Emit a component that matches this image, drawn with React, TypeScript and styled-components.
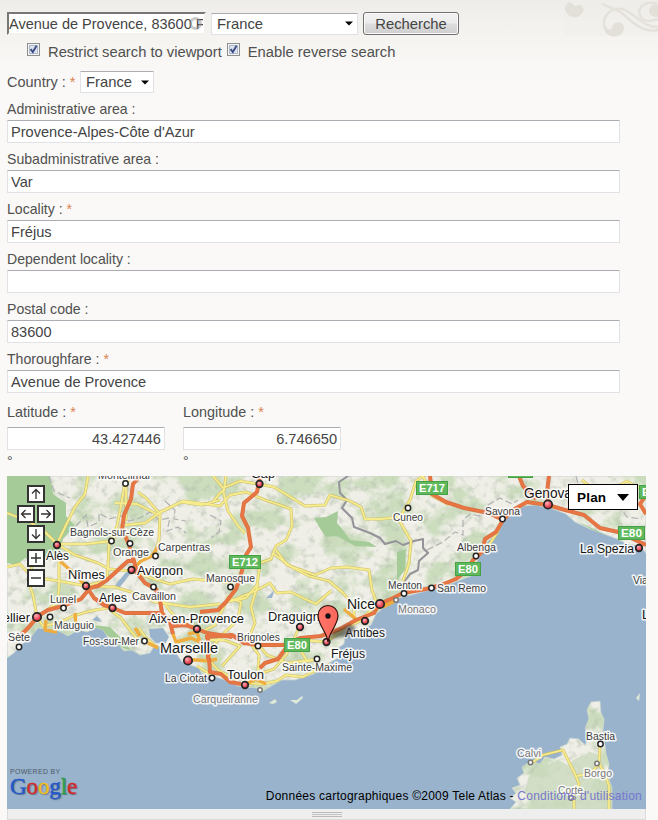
import React from 'react';
import styled, { createGlobalStyle } from 'styled-components';

const GlobalStyle = createGlobalStyle`
  * { box-sizing: border-box; }
  body {
    margin: 0;
    background: #faf9f7;
    color: #505050;
    font-family: "Liberation Sans", Arial, sans-serif;
  }
`;

const Page = styled.main`
  position: relative;
  width: 658px;
  height: 820px;
  overflow: hidden;
  padding: 12px 12px 0 7px;
  background: linear-gradient(#eeede9 0, #f3f2ee 28px, #f9f8f6 66px, #faf9f7 100px);
`;

const Flourish = styled.svg`
  position: absolute;
  top: 0;
  right: 0;
`;

const SearchRow = styled.div`
  display: flex;
  height: 23px;
  align-items: center;
`;

const SearchBox = styled.div`
  position: relative;
  width: 199px;
  height: 23px;
`;

const SearchInput = styled.input`
  width: 199px;
  height: 23px;
  padding: 0 1px 0 0;
  border: 2px solid #f3f2ef;
  border-top-color: #777;
  border-left-color: #777;
  background: #fff;
  color: #444;
  font: 14.5px "Liberation Sans", Arial, sans-serif;
  outline: none;
`;

const Throbber = styled.span`
  position: absolute;
  left: 182px;
  top: 5px;
  width: 13px;
  height: 13px;
  border: 3px solid rgba(150, 150, 150, 0.5);
  border-radius: 50%;
`;

const SelectBox = styled.div<{ $w: number; $h: number; $ml: number }>`
  display: flex;
  align-items: center;
  justify-content: space-between;
  width: ${p => p.$w}px;
  height: ${p => p.$h}px;
  margin-left: ${p => p.$ml}px;
  padding: 0 4px 0 5px;
  border: 1px solid #e0e2e6;
  border-top-color: #abadb3;
  border-radius: 1px;
  background: #fff;
  color: #444;
  font-size: 14.8px;
`;

const Button = styled.button`
  width: 96px;
  height: 23px;
  margin-left: 5px;
  padding: 0;
  border: 1px solid #707070;
  border-radius: 3px;
  background: linear-gradient(#f2f2f2 0, #ebebeb 48%, #dddddd 52%, #cfcfcf 100%);
  box-shadow: inset 0 0 0 1px #fafafa;
  color: #444;
  font: 14.8px/20px "Liberation Sans", Arial, sans-serif;
`;

const CheckRow = styled.div`
  display: flex;
  align-items: center;
  height: 20px;
  margin-top: 7px;
  padding-left: 20px;
  font-size: 14.75px;
`;

const CheckItem = styled.label`
  display: flex;
  align-items: center;
  white-space: nowrap;
  & + & { margin-left: 5px; }
`;

const CheckIcon = styled.svg`
  margin: 0 8px 5px 0;
  flex: none;
`;

const CountryRow = styled.div`
  display: flex;
  align-items: center;
  height: 24px;
  margin-top: 8px;
`;

const Star = styled.span`
  color: #d9824f;
`;

const Field = styled.div`
  height: 50px;
`;

const Label = styled.label`
  display: block;
  height: 21px;
  font-size: 14.1px;
  line-height: 21px;
  white-space: pre;
`;

const CountryLabel = styled(Label)`
  width: 69px;
  font-size: 14.5px;
`;

const Fields = styled.section`
  padding-top: 5px;
`;

const Input = styled.input<{ $right?: boolean }>`
  display: block;
  width: ${p => (p.$right ? '158px' : '613px')};
  height: 23px;
  padding: 1px 3px 0;
  border: 1px solid #e0e2e6;
  border-top-color: #abadb3;
  border-radius: 1px;
  background: #fff;
  color: #444;
  font: 14.6px "Liberation Sans", Arial, sans-serif;
  text-align: ${p => (p.$right ? 'right' : 'left')};
  outline: none;
`;

const Coordinates = styled.section`
  display: flex;
  gap: 18px;
  height: 77px;
  padding-top: 3px;
`;

const Coordinate = styled.div`
  ${Label} { height: 25px; line-height: 21px; font-size: 14.4px; }
`;

const Degree = styled.div`
  font-size: 14px;
  line-height: 20px;
  margin-top: 1px;
`;

const MapFrame = styled.section`
  position: relative;
  width: 639px;
  height: 333px;
  overflow: hidden;
`;

const MapSvg = styled.svg`
  display: block;
`;

const PadGrid = styled.div`
  position: absolute;
  left: 9px;
  top: 9px;
  display: grid;
  grid-template-columns: repeat(4, 10px);
  grid-auto-rows: 20px;
`;

const PadButton = styled.button<{ $col: number; $top?: number }>`
  grid-column: ${p => p.$col} / span 2;
  margin: ${p => p.$top ?? 0}px 0 0 1px;
  width: 18px;
  height: 18px;
  padding: 0;
  border: 2px solid #333;
  background: #fff;
  display: grid;
  place-items: center;
`;

const PlanButton = styled.button`
  position: absolute;
  left: 561px;
  top: 8px;
  width: 70px;
  height: 26px;
  display: flex;
  align-items: center;
  gap: 11px;
  padding: 0 0 0 8px;
  border: 1px solid #000;
  outline: 0;
  background: #fff;
  color: #000;
  font: bold 13.5px "Liberation Sans", Arial, sans-serif;
  letter-spacing: 0.2px;
`;

const Credit = styled.div`
  position: absolute;
  right: 4px;
  bottom: 5px;
  color: #000;
  font-size: 12px;
  line-height: 16px;
  letter-spacing: 0.235px;
  white-space: nowrap;
`;

const Terms = styled.span`
  color: #7777cc;
`;

const Brand = styled.div`
  position: absolute;
  left: 3px;
  top: 291px;
  font-size: 7px;
  line-height: 9px;
  letter-spacing: 0.3px;
  color: #4c5a68;
`;

const Wordmark = styled.div`
  margin-top: -2px;
  font: 23px/26px "Liberation Serif", serif;
  letter-spacing: -0.1px;
  text-shadow: 1px 1px 1px rgba(40, 50, 70, 0.5);
  -webkit-text-stroke: 0.4px;
`;

const Letter = styled.span<{ $c: string }>`
  color: ${p => p.$c};
`;

const Grippie = styled.div`
  display: flex;
  justify-content: center;
  align-items: flex-start;
  width: 639px;
  height: 11px;
  padding-top: 3px;
  border: 1px solid #dcdcdc;
  border-top: 0;
  background: #eee;
`;

const Grip = styled.span`
  width: 30px;
  height: 5px;
  border: 1px solid #bbb;
  border-width: 1px 0;
  background: linear-gradient(#eee 1px, #c4c4c4 1px, #c4c4c4 2px, #eee 2px);
`;

const Caret = () => (
  <svg width="8" height="5" viewBox="0 0 8 5"><path d="M0 0.5H8L4 4.5Z" fill="#000" /></svg>
);

const Check = () => (
  <CheckIcon width="13" height="13" viewBox="0 0 13 13">
    <rect x=".5" y=".5" width="12" height="12" fill="#f4f4f4" stroke="#8e8f8f" />
    <rect x="2.5" y="2.5" width="8" height="8" fill="#dce3ec" stroke="#aeb9c8" />
    <path d="M3.6 6.2L5.8 9L9.5 2.8" fill="none" stroke="#3d4c86" strokeWidth="1.9" />
  </CheckIcon>
);

const Arrow = ({ angle }: { angle: number }) => (
  <svg width="14" height="14" viewBox="0 0 14 14">
    <path d="M7 12V2.5M3 6.5L7 2.5L11 6.5" transform={`rotate(${angle} 7 7)`} fill="none" stroke="#333" strokeWidth="1.3" />
  </svg>
);

const Sign = ({ plus }: { plus?: boolean }) => (
  <svg width="14" height="14" viewBox="0 0 14 14">
    <path d={plus ? 'M2 7H12M7 2V12' : 'M2 7H12'} stroke="#333" strokeWidth="1.5" />
  </svg>
);

const MAINLAND =
  'M7 476H646V553L640 546L627 544L617 539L604 534L590 529L575 522L566 514L550 508L535 505L524 506L512 514L502 521L498 534L488 541L482 553L477 561L476 574L463 579L453 583L441 587L426 591L411 595L398 598L389 600L383 608L376 614L371 625L361 629L352 634L345 636L344 644L338 648L340 657L329 663L322 667L314 674L305 677L295 680L282 680L273 685L263 691L257 688L247 687L237 686L228 681L219 678L210 675L203 676L199 668L190 665L182 662L176 653L164 648L155 645L150 653L140 655L132 650L124 651L117 643L108 638L103 630L94 627L88 632L78 630L68 636L59 631L46 629L38 628L30 638L21 645L14 653L7 658Z';
const CORSICA =
  'M591 702L600 701L601 713L604 719L603 730L605 745L606 754L609 764L608 776L612 788L612 809H510L516 802L510 798L516 793L512 788L520 785L517 778L524 773L522 767L531 761L540 764L545 757L554 759L562 755L560 747L567 744L570 738L579 739L585 745L588 739L585 728L589 719L587 710Z';

const FORESTS = [
  'M7 476H50L53 494L66 503L66 516L75 526L63 539L60 553L42 563L25 558L17 565L7 563Z',
  'M314 518L326 517L338 511L337 523L343 530L350 540L369 542L377 547L355 546L337 536L326 537L321 530Z',
  'M397 552L406 549L405 570L397 580Z',
  'M92 625L110 627L126 643L131 651L116 645L108 636Z',
  'M575 520L596 530L617 540L607 538Z',
];

const BORDERS = [
  'M348 476L339 482L340 493L347 500L342 508L352 518L354 527L370 533L380 538L385 544L396 541L403 545L414 541L423 539L423 548L428 553L419 561L418 570L410 574L404 582L402 594',
];
const FAINT_BORDERS = [
  'M49 476L54 491L70 498', 'M76 526L86 515L88 527L99 522L99 513L109 519L121 516L129 521L140 518L150 512L159 520L170 518L167 531L178 527L186 533',
  'M165 501L175 510L174 519L186 521', 'M210 515L221 521L219 532L211 538', 'M427 550L443 542L455 532L463 535L463 520L470 514L480 516L488 505L500 498L512 504L518 500',
  'M576 476L580 491L594 492L602 507L621 509L627 517L642 519',
];

const MINOR_ROADS = [
  'M7 513L30 522L45 532L57 544L66 525L75 507L85 494L88 476', 'M57 544L85 544L112 541L126 519L126 484L132 476',
  'M57 544L75 555L98 563L109 569L131 571L154 579L170 584L193 579L232 583',
  'M7 567L20 564L32 577L59 581L86 586L115 587L131 592L155 602L190 607L220 604',
  'M125 482L121 506L117 526L109 543L108 567L107 580L86 586', 'M59 561L59 585L58 602L38 617',
  'M115 503L137 504L157 514L181 502L202 505L220 500', 'M154 556L159 540L160 514L146 498L138 492',
  'M125 525L145 523L162 511L183 501L220 506L230 495L246 492L265 500L280 505L291 509L292 526L286 540L276 546L271 559L260 563L257 585L246 598L226 602L215 625L205 630',
  'M213 502L219 494L224 490L226 476M213 476L223 488L240 481L258 484L274 487L284 493L305 506L325 505L330 495L350 501L361 507L365 519L381 519L400 517L410 500L416 481L423 476',
  'M399 520L411 541L409 563L403 581',
  'M223 490L228 511L239 527L245 533', 'M274 554L293 568L309 576L329 581L342 592L354 605L354 617',
  'M276 550L287 565L304 571L315 575L331 568L347 567L369 570L372 590L377 604', 'M233 600L253 592L270 583L277 593L291 592L303 598L316 604L331 591',
  'M258 584L251 607L255 623L248 640L259 655L258 671', 'M299 627L293 642L286 655L274 669L259 674',
  'M226 597L241 602L238 620L225 632L211 648', 'M139 641L130 630L121 618L110 610M139 628L146 638L158 648',
  'M33 563L28 580L33 595L37 617L43 626L58 623L73 616L90 611L113 607', 'M153 587L163 601L171 612L180 621L197 629',
  'M423 476L432 496L440 500L449 505', 'M503 519L497 533L489 545L476 556L467 572L453 580', 'M646 490L635 486L627 481L615 488L608 497L595 491L582 480',
  'M319 659L307 661L301 651L304 640L326 642L345 628L360 621L372 609', 'M258 644L267 655L287 663L312 660',
  'M330 664L323 669L312 672L303 677L286 675L277 681L262 684L246 683', 'M209 660L218 670L236 680M197 666L210 674',
  'M209 640L224 640L240 646L232 655L222 666', 'M530 764L543 755L563 750L568 760L575 774L579 784L574 794L574 809', 'M600 744L599 763L606 777L609 786L609 809M577 776L591 773L599 764',
];

const MAJOR_ROADS = [
  'M140 476L133 484L131 499L124 515L122 530L128 542L134 561L128 561L107 580L98 586L90 588L81 599L63 606L48 610L38 616L29 627L20 636',
  'M86 586L94 598L104 605L113 608L125 613L160 613L164 618',
  'M134 561L137 573L145 583L156 589L160 600L162 613L170 622L173 634M173 626L186 625L197 629L207 633L232 637',
  'M260 476L257 492L244 503L242 516L248 528L251 547L246 555L240 578L236 589L226 602L218 610L200 612',
  'M205 637L232 635L244 643L258 645L284 645L300 638L321 636L340 629L356 620L374 613L379 604L393 598L403 593L426 589L436 587',
  'M260 668L265 663L278 659L286 648', 'M208 638V659M209 658L210 672L221 674L230 682L241 684',
  'M430 476L432 494L446 502L464 508L489 513L503 520L513 510L527 502L548 505L565 510L584 515L600 528L618 532L646 545',
  'M503 520L496 532L485 539L482 552L473 560L466 571L456 579L441 585L429 588', 'M549 476L547 492L548 503M519 476L523 486L536 499',
  'M646 495L640 504L646 514',
];

type Town = { name: string; x: number; y: number; s: number; cx?: number; cy?: number; red?: boolean; dim?: boolean; big?: boolean; w?: number };
const TOWNS: Town[] = [
  { name: 'Montélimar', x: 98, y: 479, s: 11, cx: 125.5, cy: 483.5, w: 53 },
  { name: 'Bagnols-sur-Cèze', x: 70, y: 536, s: 10.5, cx: 111.5, cy: 541, w: 84 },
  { name: 'Orange', x: 113, y: 556, s: 10.5, cx: 130, cy: 543.5, w: 36 },
  { name: 'Carpentras', x: 158, y: 551, s: 10.5, cx: 155.5, cy: 556, w: 52 },
  { name: 'Alès', x: 46, y: 559.5, s: 12, cx: 57, cy: 545, red: true, w: 23 },
  { name: 'Avignon', x: 137, y: 575, s: 13, cx: 131.5, cy: 570, red: true, w: 46 },
  { name: 'Nîmes', x: 68, y: 579, s: 13, cx: 86, cy: 586, red: true, w: 37 },
  { name: 'Manosque', x: 206, y: 582, s: 10.5, cx: 230.5, cy: 587, w: 49 },
  { name: 'Lunel', x: 50, y: 602.5, s: 10.5, cx: 63.5, cy: 608, w: 26 },
  { name: 'Arles', x: 99, y: 602, s: 12.5, cx: 112.5, cy: 608, red: true, w: 28 },
  { name: 'Cavaillon', x: 132, y: 600, s: 10.5, cx: 153.5, cy: 587, w: 44 },
  { name: 'Mauguio', x: 54, y: 629, s: 10.5, cx: 50, cy: 617, w: 40 },
  { name: 'Montpellier', x: -33, y: 622, s: 13, cx: 37, cy: 617, red: true, big: true, w: 63 },
  { name: 'Sète', x: 8, y: 641, s: 10.5, cx: 19, cy: 647, w: 22 },
  { name: 'Fos-sur-Mer', x: 83, y: 645, s: 10.5, cx: 144.5, cy: 641, w: 56 },
  { name: 'Aix-en-Provence', x: 149, y: 623, s: 12.5, cx: 197, cy: 629, red: true, w: 95 },
  { name: 'Marseille', x: 160, y: 653, s: 14, cx: 188, cy: 660.5, red: true, big: true, w: 58 },
  { name: 'La Ciotat', x: 165, y: 682, s: 10.5, cx: 212, cy: 678, w: 42 },
  { name: 'Toulon', x: 227, y: 678.5, s: 13, cx: 245, cy: 685, red: true, w: 37 },
  { name: 'Carqueiranne', x: 193, y: 702.5, s: 10.5, cx: 260, cy: 690, dim: true, w: 65 },
  { name: 'Brignoles', x: 237, y: 640.5, s: 10.5, cx: 258, cy: 646, w: 43 },
  { name: 'Draguignan', x: 268, y: 620.5, s: 12.5, cx: 300, cy: 627, red: true, w: 66 },
  { name: 'Gap', x: 251, y: 478, s: 12.5, cx: 259.5, cy: 484, red: true, w: 24 },
  { name: 'Nice', x: 347, y: 609, s: 14, cx: 380, cy: 604, red: true, big: true, w: 28 },
  { name: 'Antibes', x: 345, y: 636.5, s: 12, cx: 365, cy: 621, red: true, w: 40 },
  { name: 'Sainte-Maxime', x: 282, y: 671, s: 10.5, cx: 317, cy: 659, w: 70 },
  { name: 'Fréjus', x: 331, y: 658, s: 12, cx: 326.5, cy: 642, red: true, w: 34 },
  { name: 'Menton', x: 388, y: 588.5, s: 10.5, cx: 404, cy: 593.5, w: 34 },
  { name: 'Monaco', x: 398, y: 613, s: 10.5, cx: 396, cy: 600, dim: true, w: 38 },
  { name: 'San Remo', x: 437, y: 592, s: 10.5, cx: 431.5, cy: 588, w: 49 },
  { name: 'Albenga', x: 457, y: 551, s: 10.5, cx: 476, cy: 556, w: 39 },
  { name: 'Savona', x: 485, y: 514.5, s: 10.5, cx: 502.5, cy: 519, w: 35 },
  { name: 'Cuneo', x: 393, y: 521, s: 10.5, cx: 408, cy: 508, w: 30 },
  { name: 'Genova', x: 524, y: 497.5, s: 14, cx: 548, cy: 504.5, red: true, big: true, w: 48 },
  { name: 'La Spezia', x: 580, y: 552.5, s: 12, cx: 639, cy: 548, red: true, w: 54 },
  { name: 'Viareggio', x: 633, y: 584, s: 10.5, w: 44 },
  { name: 'Livorno', x: 642, y: 619, s: 12, w: 42 },
  { name: 'Calvi', x: 517, y: 756.5, s: 10.5, cx: 530.5, cy: 762.5, dim: true, w: 24 },
  { name: 'Bastia', x: 586, y: 739.5, s: 10.5, cx: 600.5, cy: 744, w: 29 },
  { name: 'Borgo', x: 584, y: 777, s: 10.5, cx: 597, cy: 763.5, dim: true, w: 28 },
  { name: 'Corte', x: 558, y: 793.5, s: 10.5, cx: 571, cy: 798, dim: true, w: 25 },
];

const SHIELDS = [
  { t: 'E712', x: 229, y: 555, w: 32 }, { t: 'E80', x: 284, y: 638, w: 26 }, { t: 'E717', x: 416, y: 481, w: 32 },
  { t: 'E80', x: 455, y: 562, w: 26 }, { t: 'E80', x: 618, y: 526, w: 27 }, { t: 'E80', x: 639, y: 485, w: 27 }, { t: '', x: 508, y: 464, w: 25 },
];

const MapDrawing = () => (
  <MapSvg width="639" height="333" viewBox="7 476 639 333">
    <defs>
      <clipPath id="land"><path d={MAINLAND + CORSICA} /></clipPath>
      <filter id="relief" x="0" y="0" width="100%" height="100%" colorInterpolationFilters="sRGB">
        <feTurbulence type="fractalNoise" baseFrequency="0.027 0.034" numOctaves="5" seed="8" />
        <feColorMatrix values="0 0 0 0 0.8  0 0 0 0 0.865  0 0 0 0 0.745  6 0 0 0 -2.8" />
      </filter>
      <filter id="shade" x="0" y="0" width="100%" height="100%" colorInterpolationFilters="sRGB">
        <feTurbulence type="fractalNoise" baseFrequency="0.13" numOctaves="3" seed="22" />
        <feColorMatrix values="0 0 0 0 0.68  0 0 0 0 0.73  0 0 0 0 0.66  0 3 0 0 -1.5" />
      </filter>
      <radialGradient id="town" cx="38%" cy="32%"><stop offset="0" stopColor="#ffb3bb" /><stop offset="1" stopColor="#e8404f" /></radialGradient>
      <linearGradient id="pin" x2="1" y2="0"><stop offset="0" stopColor="#ff7569" /><stop offset="1" stopColor="#f9665b" /></linearGradient>
      <filter id="soft"><feGaussianBlur stdDeviation="1.6" /></filter>
    </defs>
    <rect x="7" y="476" width="639" height="333" fill="#99b3cc" />
    <path d={MAINLAND + CORSICA} fill="#f0efe7" stroke="#c3d0d2" strokeWidth=".8" />
    <g clipPath="url(#land)">
      <rect x="7" y="476" width="639" height="333" filter="url(#relief)" />
      <rect x="7" y="476" width="639" height="333" filter="url(#shade)" opacity=".5" />
      <path d="M528 778L536 768L550 764L558 760L568 765L575 759L590 752L604 756L607 809H535L525 793Z" fill="#cbdabd" opacity=".8" />
      {FORESTS.map(d => <path key={d} d={d} fill="#a5cb99" />)}
      <path d="M149 629L163 628L169 637L165 644L156 643L150 637ZM92 620L97 616L102 622ZM113 588L127 571L130 574L120 587ZM266 598L274 591L272 598Z" fill="#9bb4ce" />
    </g>
    <path d="M269 703L275 699L277 702L273 704ZM290 700L297 700L302 696L303 698L296 704ZM636 698L640 693L639 701Z" fill="#dfe9d8" />
    <g fill="none" stroke="#b1b1b3" strokeWidth="1.2" strokeDasharray="7 3">{FAINT_BORDERS.map(d => <path key={d} d={d} />)}</g>
    <g fill="none" stroke="#939399" strokeWidth="2" strokeLinejoin="round">{BORDERS.map(d => <path key={d} d={d} />)}</g>
    <g fill="none" strokeLinejoin="round">
      {MINOR_ROADS.map(d => <path key={'a' + d} d={d} stroke="#cdc06f" strokeWidth="3" />)}
      {MINOR_ROADS.map(d => <path key={d} d={d} stroke="#f7ec8c" strokeWidth="1.8" />)}
      <path d="M131 571L141 561L152 556L158 547M60 561L70 570L84 584M135 628L140 636M148 643L158 648M188 660H197L209 661L217 659M209 652V662M358 621L344 609M379 604L395 601L383 607M173 634L176 642L191 638L200 642L197 632L188 634M46 620L45 630L57 632M75 613L76 626M246 684L256 679L266 684" stroke="#efac3f" strokeWidth="3.4" />
      {MAJOR_ROADS.map(d => <path key={'a' + d} d={d} stroke="#d97245" strokeWidth="4" />)}
      {MAJOR_ROADS.map(d => <path key={d} d={d} stroke="#e87643" strokeWidth="2.6" />)}
    </g>
    {SHIELDS.map(s => (
      <g key={s.t + s.x}>
        <rect x={s.x + .5} y={s.y + .5} width={s.w - 1} height="13" fill="#5fb95c" stroke="#45a046" />
        <text x={s.x + s.w / 2} y={s.y + 11} fill="#fff" fontSize="10.5" fontWeight="700" textAnchor="middle" textLength={s.w - 6} lengthAdjust="spacingAndGlyphs">{s.t}</text>
      </g>
    ))}
    {TOWNS.map(t => (
      <text key={t.name} x={t.x} y={t.y} fontSize={t.s} fill={t.dim ? '#777' : t.s > 11.5 ? '#161616' : '#3b3b3b'} stroke="#fff" strokeOpacity=".85" strokeWidth="3.2" strokeLinejoin="round" paintOrder="stroke" textLength={t.w} lengthAdjust="spacingAndGlyphs">{t.name}</text>
    ))}
    {TOWNS.filter(t => t.cx !== undefined).map(t => (
      <circle key={t.name} cx={t.cx} cy={t.cy} r={t.big ? 4.2 : t.red ? 3.3 : t.dim ? 2.2 : 2.7} fill={t.red ? 'url(#town)' : '#fff'} stroke={t.dim ? '#777' : '#252525'} strokeWidth={t.red ? 1.7 : 1.5} />
    ))}
    <path d="M327 641L334 631L350 624L356 628L348 636L335 638Z" fill="#222" opacity=".55" filter="url(#soft)" />
    <path d="M328 642C327 632 318 625 318 615.5A10 10 0 0 1 338 615.5C338 625 329 632 328 642Z" fill="url(#pin)" stroke="#2a0a08" strokeWidth="1.1" />
    <circle cx="328" cy="616" r="2.7" fill="#111" />
  </MapSvg>
);

const FIELDS: [string, string, boolean][] = [
  ['Administrative area :', "Provence-Alpes-Côte d'Azur", false],
  ['Subadministrative area :', 'Var', false],
  ['Locality : ', 'Fréjus', true],
  ['Dependent locality :', '', false],
  ['Postal code :', '83600', false],
  ['Thoroughfare : ', 'Avenue de Provence', true],
];

const COORDINATES: [string, string][] = [['Latitude : ', '43.427446'], ['Longitude : ', '6.746650']];

const BRAND_LETTERS: [string, string][] = [['G', '#2458c9'], ['o', '#cf2b2b'], ['o', '#edbd20'], ['g', '#2458c9'], ['l', '#2ca147'], ['e', '#cf2b2b']];

export default function App() {
  return (
    <>
      <GlobalStyle />
      <Page>
        <Flourish width="100" height="42" viewBox="0 0 100 42">
          <rect x="6" width="94" height="36" fill="#f1efea" opacity=".35" />
          <g fill="none" stroke="#e5e2dc" strokeWidth="2.6" strokeLinecap="round">
            <path d="M45 4C52 9 58 8 65 14C75 23 86 33 100 30" />
            <path d="M100 27C85 28 76 12 64 9C52 7 43 17 47 28" />
            <path d="M98 3C84 1 78 10 83 17C87 23 94 21 100 19" />
          </g>
          <g fill="#e3e0d9">
            <path d="M10 3C15 1 15 7 18 6C23 3 27 7 25 12C22 19 11 19 8 12C6 8 7 5 10 3Z" />
            <path d="M46 24C50 32 54 30 55 25C58 20 67 22 66 29C64 38 52 39 47 32Z" />
            <path d="M91 11C91 6 96 3 100 5V17C95 17 91 15 91 11Z" />
          </g>
        </Flourish>
        <SearchRow>
          <SearchBox>
            <SearchInput defaultValue="Avenue de Provence, 83600 Fréjus" />
            <Throbber />
          </SearchBox>
          <SelectBox $w={147} $h={22} $ml={5}>France<Caret /></SelectBox>
          <Button>Recherche</Button>
        </SearchRow>
        <CheckRow>
          <CheckItem><Check />Restrict search to viewport</CheckItem>
          <CheckItem><Check />Enable reverse search</CheckItem>
        </CheckRow>
        <CountryRow>
          <CountryLabel>Country : <Star>*</Star></CountryLabel>
          <SelectBox $w={74} $h={22} $ml={4}>France<Caret /></SelectBox>
        </CountryRow>
        <Fields>
          {FIELDS.map(([label, value, required]) => (
            <Field key={label}>
              <Label>{label}{required && <Star>*</Star>}</Label>
              <Input defaultValue={value} />
            </Field>
          ))}
        </Fields>
        <Coordinates>
          {COORDINATES.map(([label, value]) => (
            <Coordinate key={label}>
              <Label>{label}<Star>*</Star></Label>
              <Input $right defaultValue={value} />
              <Degree>°</Degree>
            </Coordinate>
          ))}
        </Coordinates>
        <MapFrame>
          <MapDrawing />
          <PadGrid>
            <PadButton $col={2}><Arrow angle={0} /></PadButton>
            <PadButton $col={1}><Arrow angle={-90} /></PadButton>
            <PadButton $col={3}><Arrow angle={90} /></PadButton>
            <PadButton $col={2}><Arrow angle={180} /></PadButton>
            <PadButton $col={2} $top={4}><Sign plus /></PadButton>
            <PadButton $col={2} $top={4}><Sign /></PadButton>
          </PadGrid>
          <PlanButton>Plan<svg width="12" height="7" viewBox="0 0 12 7"><path d="M0 0H12L6 7Z" /></svg></PlanButton>
          <Brand>
            POWERED BY
            <Wordmark>{BRAND_LETTERS.map(([c, color], i) => <Letter key={i} $c={color}>{c}</Letter>)}</Wordmark>
          </Brand>
          <Credit>Données cartographiques ©2009 Tele Atlas - <Terms>Conditions d'utilisation</Terms></Credit>
        </MapFrame>
        <Grippie><Grip /></Grippie>
      </Page>
    </>
  );
}
